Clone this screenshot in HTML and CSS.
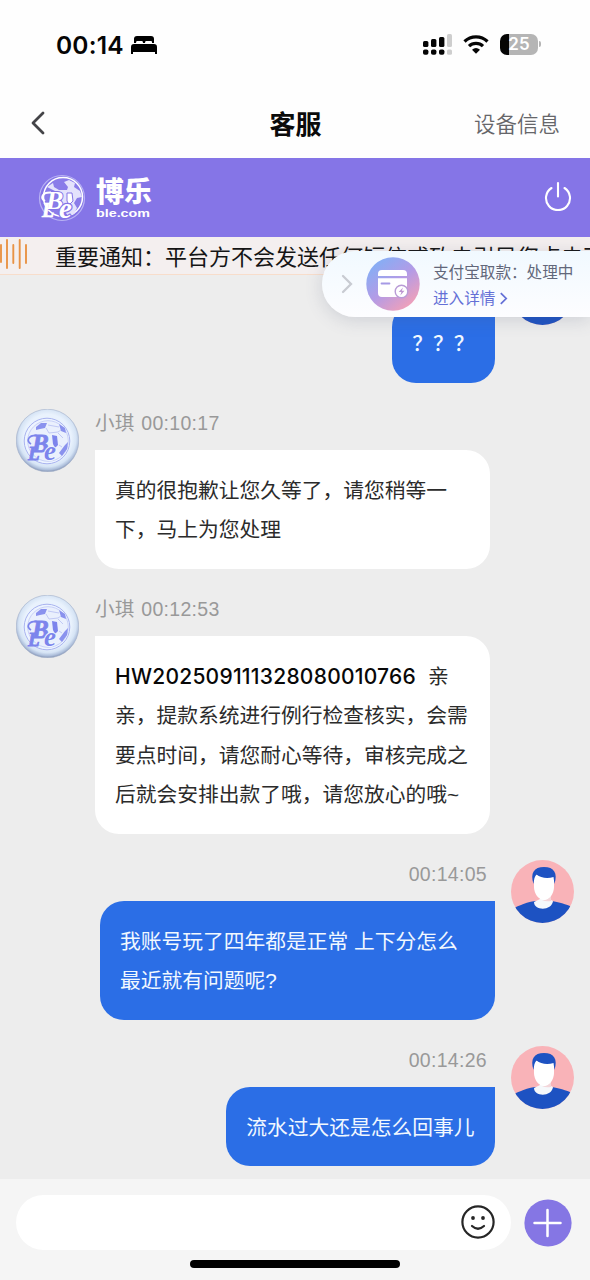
FILE: index.html
```html
<!DOCTYPE html>
<html lang="zh-CN">
<head>
<meta charset="utf-8">
<title>客服</title>
<link rel="stylesheet" href="styles.css">
</head>
<body>
<svg class="defs" width="0" height="0" aria-hidden="true">
  <defs>
    <radialGradient id="rim" cx=".5" cy=".46" r=".54">
      <stop offset=".7" stop-color="#e9f2fd"/>
      <stop offset=".85" stop-color="#d6e4f5"/>
      <stop offset=".94" stop-color="#aebfdb"/>
      <stop offset="1" stop-color="#8494b4"/>
    </radialGradient>
    <linearGradient id="card" x1=".15" y1=".1" x2=".8" y2=".95">
      <stop offset="0" stop-color="#85aef5"/>
      <stop offset=".5" stop-color="#b39be6"/>
      <stop offset="1" stop-color="#f2a0b8"/>
    </linearGradient>
    <clipPath id="round"><circle cx="31.5" cy="31.5" r="31.5"/></clipPath>
  </defs>
  <symbol id="agent" viewBox="0 0 63 63">
    <circle cx="31.5" cy="31.5" r="31.3" fill="url(#rim)" stroke="#a3b0c9" stroke-width=".6"/>
    <circle cx="31" cy="32" r="22.800" fill="#edf4ff" stroke="#a9b3f0" stroke-width="1"/>
    <circle cx="32" cy="32" r="20.300" fill="#eaf0fd" stroke="#bfc8f5" stroke-width=".8"/>
    <path d="M20 18l5-4 6 0-2 5-5 1-4 1zM43 15l6 4 1 5-5-2zM49 36l3-3-1 7-5 7-3-3z" fill="#8a92ee"/>
    <path d="M32 16l11 2M30 19l3 5 9-1 3-2M42 24l5 5M43 36l3 2" stroke="#c1c9f5" fill="none"/>
    <path d="M36 26l5 1 1 9-3 3-2-4z" fill="#7c84ec"/>
    <text class="mark" x="16" y="43" font-size="25" fill="#7c84ec" stroke="#7c84ec" stroke-width=".8">B</text>
    <text class="mark" x="12" y="50.500" font-size="19" fill="#7c84ec" stroke="#7c84ec" stroke-width=".8">L</text>
    <text class="mark" x="28" y="50.500" font-size="27" fill="#7c84ec" stroke="#edf4ff" stroke-width="2" paint-order="stroke">e</text>
    <path d="M15 35c-5-3-3-9 6-8.500" fill="none" stroke="#7c84ec" stroke-width="1.700"/>
  </symbol>
  <symbol id="user" viewBox="0 0 63 63">
    <g clip-path="url(#round)">
      <path d="M0 0h63v63H0z" fill="#f9b3b8"/>
      <path d="M0 50c5-3 12-7 24-9h17c10 2 17 4 22 7v15H0z" fill="#1d52c2"/>
      <path d="M29 34h11v6l2 1c-1 10-19 10-19 1l6-3z" fill="#f5f8fb"/>
      <path d="M31 40q7 0 9-6v7q-5 1-9-1z" fill="#f3d6da"/>
      <path d="M23 15h20v12c0 7-5 13-10 13s-10-6-10-13z" fill="#fff"/>
      <path d="M22.500 24C19 13 23 7 33 7s14 6 10.500 17l-1-7c-6 2-13 1-17-2.500-2 2-2.500 5-3 9.500z" fill="#1d52c2"/>
    </g>
  </symbol>
</svg>

<div class="screen">
  <div class="status">
    <span class="clock">00:14</span>
    <svg class="bed" viewBox="0 0 26 18"><path d="M3 7V3q0-3 3-3h14q3 0 3 3v4h-2V6q0-1-1-1h-5q-1 0-1 2h-2q0-2-1-2H6Q5 5 5 7zM0 11q0-3 3-3h20q3 0 3 3v7h-2v-2H2v2H0z"/></svg>
    <svg class="signal" viewBox="0 0 30 21">
      <g fill="#050505"><rect y="7" width="5.400" height="6" rx="1.500"/><rect x="8" y="5" width="5.400" height="8" rx="1.500"/><rect x="16" y="3" width="5.400" height="10" rx="1.500"/><rect y="15.500" width="5.400" height="5.300" rx="1.800"/><rect x="8" y="15.500" width="5.400" height="5.300" rx="1.800"/><rect x="16" y="15.500" width="5.400" height="5.300" rx="1.800"/></g>
      <g fill="#cecece"><rect x="24" width="5" height="13" rx="1.500"/><rect x="24" y="15.500" width="5" height="5.300" rx="1.500"/></g>
    </svg>
    <svg class="wifi" viewBox="0 0 26 20"><g fill="none" stroke="#050505" stroke-width="3.200"><path d="M1.500 7.500a16.500 16.500 0 0 1 23 0"/><path d="M6 12.200a10 10 0 0 1 14 0"/></g><path d="M9 15.700q4-3.300 8 0l-4 4z" fill="#050505"/></svg>
    <div class="battery"><span class="level">25</span></div><i class="battery-tip"></i>
  </div>

  <header class="nav">
    <svg class="back" viewBox="0 0 14 24"><path d="M12 2L2 12l10 10" fill="none" stroke="#444448" stroke-width="2.800" stroke-linecap="round" stroke-linejoin="round"/></svg>
    <h1 class="title">客服</h1>
    <a class="device">设备信息</a>
  </header>

  <div class="brand">
    <svg class="ball" viewBox="0 0 48 48">
      <circle cx="24" cy="24" r="22.500" fill="none" stroke="#b9b3f4" stroke-width="1.200"/>
      <circle cx="25" cy="23" r="19.500" fill="#8a7ce9" stroke="#fff" stroke-width="1.500"/>
      <path d="M9 13l6-4 1 4 5 3 8 0 1-3-4-5 5-2 6 3-1 4 6 4 2 6-5 1-3 5 3 5-3 6-6 2-6-9-1-12-6-4z" fill="#e4e2fc"/>
      <path d="M29 19l5 0 1 8-4 4-2-4z" fill="#fff" stroke="#8575e7" stroke-width="1"/>
      <text class="mark" x="8" y="35" font-size="26" fill="#fff" stroke="#8575e7" stroke-width="2" paint-order="stroke">B</text>
      <text class="mark" x="4" y="43" font-size="20" fill="#fff" stroke="#fff" stroke-width=".7">L</text>
      <text class="mark" x="21" y="43.500" font-size="29" fill="#fff" stroke="#8575e7" stroke-width="2.500" paint-order="stroke">e</text>
      <path d="M7 27c-5-3-3-9 6-8.500" fill="none" stroke="#fff" stroke-width="2"/>
    </svg>
    <div class="wordmark"><span class="name">博乐</span><svg class="domain" viewBox="0 0 55 11"><text x="0" y="8.500" textLength="54" lengthAdjust="spacingAndGlyphs">ble.com</text></svg></div>
    <svg class="power" viewBox="0 0 28 30"><path d="M7.500 7A12 12 0 1 0 20.500 7M14 2v13.500" fill="none" stroke="#fff" stroke-width="2.100" stroke-linecap="round"/></svg>
  </div>

  <div class="notice">
    <svg class="wave" viewBox="0 0 28 30"><path d="M1 6v17M7 1v28M13.300 6v18M19.700 1v28M26 6v18" stroke="#e99345" stroke-width="1.900" stroke-linecap="round"/></svg>
    <p class="ticker">重要通知：平台方不会发送任何短信或致电引导您点击不明链接</p>
  </div>

  <main class="chat">
    <section class="msg mine">
      <div class="body"><div class="meta"></div><div class="bubble short">？？？</div></div>
      <svg class="avatar"><use href="#user"/></svg>
    </section>
    <section class="msg">
      <svg class="avatar"><use href="#agent"/></svg>
      <div class="body"><div class="meta">小琪 00:10:17</div><div class="bubble">真的很抱歉让您久等了，请您稍等一<br>下，马上为您处理</div></div>
    </section>
    <section class="msg">
      <svg class="avatar"><use href="#agent"/></svg>
      <div class="body"><div class="meta">小琪 00:12:53</div><div class="bubble"><b class="order">HW202509111328080010766</b>亲<br>亲，提款系统进行例行检查核实，会需<br>要点时间，请您耐心等待，审核完成之<br>后就会安排出款了哦，请您放心的哦~</div></div>
    </section>
    <section class="msg mine">
      <div class="body"><div class="meta">00:14:05</div><div class="bubble wide">我账号玩了四年都是正常 上下分怎么<br>最近就有问题呢?</div></div>
      <svg class="avatar"><use href="#user"/></svg>
    </section>
    <section class="msg mine">
      <div class="body"><div class="meta">00:14:26</div><div class="bubble">流水过大还是怎么回事儿</div></div>
      <svg class="avatar"><use href="#user"/></svg>
    </section>
  </main>

  <footer class="composer">
    <div class="row">
      <div class="input">
        <svg class="smile" viewBox="0 0 34 34"><circle cx="17" cy="17" r="15.600" fill="none" stroke="#262626" stroke-width="2.200"/><circle cx="12" cy="13" r="1.900" fill="#262626"/><circle cx="22" cy="13" r="1.900" fill="#262626"/><path d="M11 21q6 5.500 12 0" fill="none" stroke="#262626" stroke-width="2.200" stroke-linecap="round"/></svg>
      </div>
      <svg class="plus" viewBox="0 0 48 48"><circle cx="24" cy="24" r="23.600" fill="#8576e4"/><path d="M23.500 11v26M10.500 24h26" stroke="#fff" stroke-width="2.500" stroke-linecap="round"/></svg>
    </div>
    <div class="home"></div>
  </footer>

  <aside class="popup">
    <svg class="more" viewBox="0 0 12 20"><path d="M2 2l8 8-8 8" fill="none" stroke="#c8cbd2" stroke-width="2.300" stroke-linecap="round"/></svg>
    <svg class="pay" viewBox="0 0 54 54">
      <circle cx="27" cy="27" r="26.700" fill="url(#card)"/>
      <path d="M12 19v-2q0-4 4-4h21q4 0 4 4v2zM12 21.300h29v14.700q0 4-4 4H16q-4 0-4-4z" fill="#fff"/>
      <path d="M15.500 26.500h8" stroke="#a69ae5" stroke-width="1.800" stroke-linecap="round"/>
      <circle cx="35.500" cy="34.500" r="6.300" fill="#fff" stroke="#b99bd6" stroke-width="1.400"/>
      <path d="M37 30.500l-4.300 4.500h2.700L34.300 38.500l4.200-4.700h-2.700z" fill="#bc95d0"/>
    </svg>
    <div class="info"><span class="state">支付宝取款：处理中</span><span class="detail">进入详情<svg class="arrow" viewBox="0 0 8 12"><path d="M1.500 1L6.500 6l-5 5" fill="none" stroke="#6470d6" stroke-width="1.600"/></svg></span></div>
  </aside>
</div>
</body>
</html>
```
FILE: styles.css
```css
* { box-sizing: border-box; }
body { margin: 0; font-family: "Liberation Sans", "Noto Sans CJK SC", sans-serif; }
svg { display: block; flex: none; }
.defs { position: absolute; }
.screen { position: relative; width: 590px; height: 1280px; display: flex; flex-direction: column; overflow: hidden; background: #fefefe; }
.mark { font-family: "Liberation Serif", serif; font-weight: 700; font-style: italic; }

.status { height: 88px; display: flex; align-items: center; padding: 0 49px 0 56px; }
.clock { font: 600 24.5px/30px Inter, sans-serif; letter-spacing: .2px; margin-top: 1px; color: #050505; width: 75px; white-space: nowrap; }
.bed { width: 26px; height: 18px; margin-top: 1px; }
.signal { width: 30px; height: 21px; margin-left: auto; }
.wifi { width: 26px; height: 20px; margin-left: 10px; }
.battery { width: 38px; height: 21px; margin-left: 11px; border-radius: 7px; background: linear-gradient(90deg, #050505 25%, #b5b5b5 25%); display: flex; align-items: center; justify-content: center; }
.level { font: 600 17px/21px Inter, sans-serif; color: #fff; }
.battery-tip { width: 2px; height: 6px; margin-left: 1px; border-radius: 0 2px 2px 0; background: #b5b5b5; }

.nav { height: 70px; display: grid; grid-template-columns: 1fr auto 1fr; align-items: center; padding: 0 30px 0 31px; }
.back { width: 14px; height: 24px; }
.title { margin: 3px 0 0; font-size: 26px; line-height: 38px; font-weight: 700; color: #0b0b0b; }
.device { justify-self: end; margin-top: 3px; font-size: 21.5px; line-height: 32px; color: #66666a; font-weight: 350; }

.brand { height: 79px; display: flex; align-items: center; padding: 0 18px 0 38px; background: #8575e7; }
.ball { width: 48px; height: 48px; }
.wordmark { margin: 1px 0 0 10px; display: flex; flex-direction: column; color: #fff; }
.name { font-size: 28px; line-height: 31px; font-weight: 900; }
.domain { width: 55px; height: 11px; font: 700 11px "Liberation Sans", sans-serif; fill: #fff; }
.power { width: 28px; height: 30px; margin: -3px 0 0 auto; }

.notice { height: 38px; display: flex; align-items: center; background: #f4efef; border-bottom: 1px solid #f8ddcb; overflow: hidden; }
.wave { width: 28px; height: 30px; margin-top: -4px; }
.ticker { margin: 5px 0 0 27px; font-size: 22px; line-height: 32px; color: #151515; white-space: nowrap; }

.chat { flex: 1; min-height: 0; overflow: hidden; display: flex; flex-direction: column; justify-content: flex-end; gap: 26px; padding: 0 16px 13px; background: #ededed; }
.msg { display: flex; flex: none; align-items: flex-start; gap: 16px; }
.mine { justify-content: flex-end; }
.avatar { width: 63px; height: 63px; }
.body { display: flex; flex-direction: column; align-items: flex-start; }
.mine .body { align-items: flex-end; }
.meta { height: 41px; padding-right: 8px; font-size: 19.5px; line-height: 28px; letter-spacing: .3px; word-spacing: 1px; color: #999; white-space: pre; }
.bubble { min-width: 0; padding: 21px 20.5px 19px 20px; font-size: 20.75px; line-height: 39.5px; color: #2b2b2b; background: #fff; border-radius: 0 24px 24px 24px; white-space: nowrap; }
.msg:not(.mine) .bubble, .wide { width: 395px; }
.mine .bubble { color: #f1f8ff; background: #2b6ee6; border-radius: 24px 0 24px 24px; }
.mine .short { font-weight: 500; }
.order { display: inline-block; width: 313px; font: 500 21px/39px Inter, sans-serif; letter-spacing: .25px; color: #080808; }

.composer { height: 101px; padding: 16px 18px 0 16px; background: #f5f5f5; }
.row { display: flex; align-items: center; gap: 12.5px; }
.input { width: 495px; height: 55px; border-radius: 28px; background: #fff; display: flex; align-items: center; justify-content: flex-end; padding: 0 16px 2px 0; }
.smile { width: 34px; height: 34px; }
.plus { width: 48px; height: 48px; }
.home { width: 210px; height: 8px; margin: 10px auto 0 174px; border-radius: 4px; background: #000; }

.popup { position: absolute; top: 251px; right: 0; width: 268px; height: 66px; display: flex; align-items: center; padding-left: 19px; border-radius: 33px 0 0 33px; background: linear-gradient(#f1f9ff, #fdfdff); box-shadow: 0 3px 18px rgba(80, 90, 120, .2); }
.more { width: 12px; height: 20px; }
.pay { width: 54px; height: 54px; margin-left: 13px; }
.info { margin: 3px 0 0 13px; display: flex; flex-direction: column; font-size: 15.6px; line-height: 26px; white-space: nowrap; }
.state { color: #62677a; }
.detail { display: flex; align-items: center; color: #6470d6; }
.arrow { width: 9px; height: 13px; margin-left: 4px; }
```
